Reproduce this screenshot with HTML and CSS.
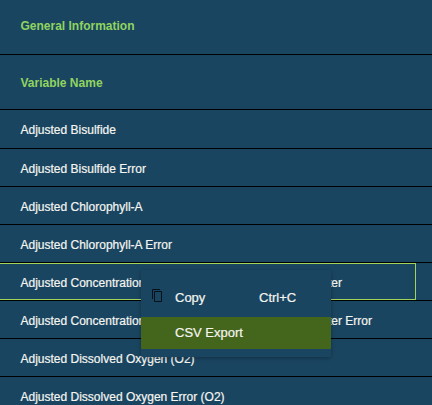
FILE: index.html
```html
<!DOCTYPE html>
<html lang="en">
<head>
<meta charset="utf-8">
<title>Variables</title>
<link rel="stylesheet" href="styles.css">
</head>
<body>
<main class="grid">
  <div class="header group">General Information</div>
  <div class="header column">Variable Name</div>
  <div class="row first">Adjusted Bisulfide</div>
  <div class="row">Adjusted Bisulfide Error</div>
  <div class="row">Adjusted Chlorophyll-A</div>
  <div class="row">Adjusted Chlorophyll-A Error</div>
  <div class="row focused"><span>Adjusted Concentration of Colored Dissolved Organic Matter</span></div>
  <div class="row">Adjusted Concentration of Colored Dissolved Organic Matter Error</div>
  <div class="row">Adjusted Dissolved Oxygen (O2)</div>
  <div class="row">Adjusted Dissolved Oxygen Error (O2)</div>
</main>
<div class="menu">
  <div class="item copy">
    <svg class="icon" width="12" height="14" viewBox="0 0 12 14" fill="none" stroke="#061018"><path d="M.5 10V.5H8"/><path d="M2.5 2.5h7v10h-7z"/></svg>
    <span class="label">Copy</span>
    <span>Ctrl+C</span>
  </div>
  <div class="item active"><span class="label">CSV Export</span></div>
</div>
</body>
</html>
```
FILE: styles.css
```css
* { box-sizing: border-box; }
body {
  margin: 0;
  height: 405px;
  overflow: hidden;
  background: #1a4561;
  color: #f5f5f0;
  font-family: "Liberation Sans", Arial, sans-serif;
}
.grid { font-size: 12px; white-space: nowrap; }
.row, .menu { -webkit-text-stroke: .2px currentColor; }
.header {
  display: flex;
  align-items: center;
  height: 55px;
  padding: 0 20.5px;
  border-bottom: 1px solid #000;
  color: #90d45f;
  font-weight: bold;
}
.group { padding-bottom: 3px; }
.column { padding-top: 2px; }
.row {
  display: flex;
  align-items: center;
  height: 38px;
  padding: 3px 20.5px 0;
  border-bottom: 1px solid #000;
}
.first { height: 39px; padding-top: 1px; }
.focused { padding: 0; }
.focused span {
  width: 416px;
  height: 37px;
  padding-left: 20.5px;
  border: 1px solid #a1d45c;
  border-left: 0;
  line-height: 38px;
}
.menu {
  position: absolute;
  left: 141px;
  top: 270px;
  width: 190px;
  height: 87px;
  padding: 8px 0;
  border-radius: 2px;
  background: #1a4561;
  box-shadow: 0 1px 4px rgba(0, 0, 0, .3);
  font-size: 13px;
}
.item { display: flex; align-items: center; height: 32px; }
.copy { height: 39px; padding-left: 11px; }
.icon { margin: -4px 11px 0 0; }
.copy .label { width: 84px; }
.active { padding-left: 34px; padding-bottom: 1px; background: #44651c; }
```
